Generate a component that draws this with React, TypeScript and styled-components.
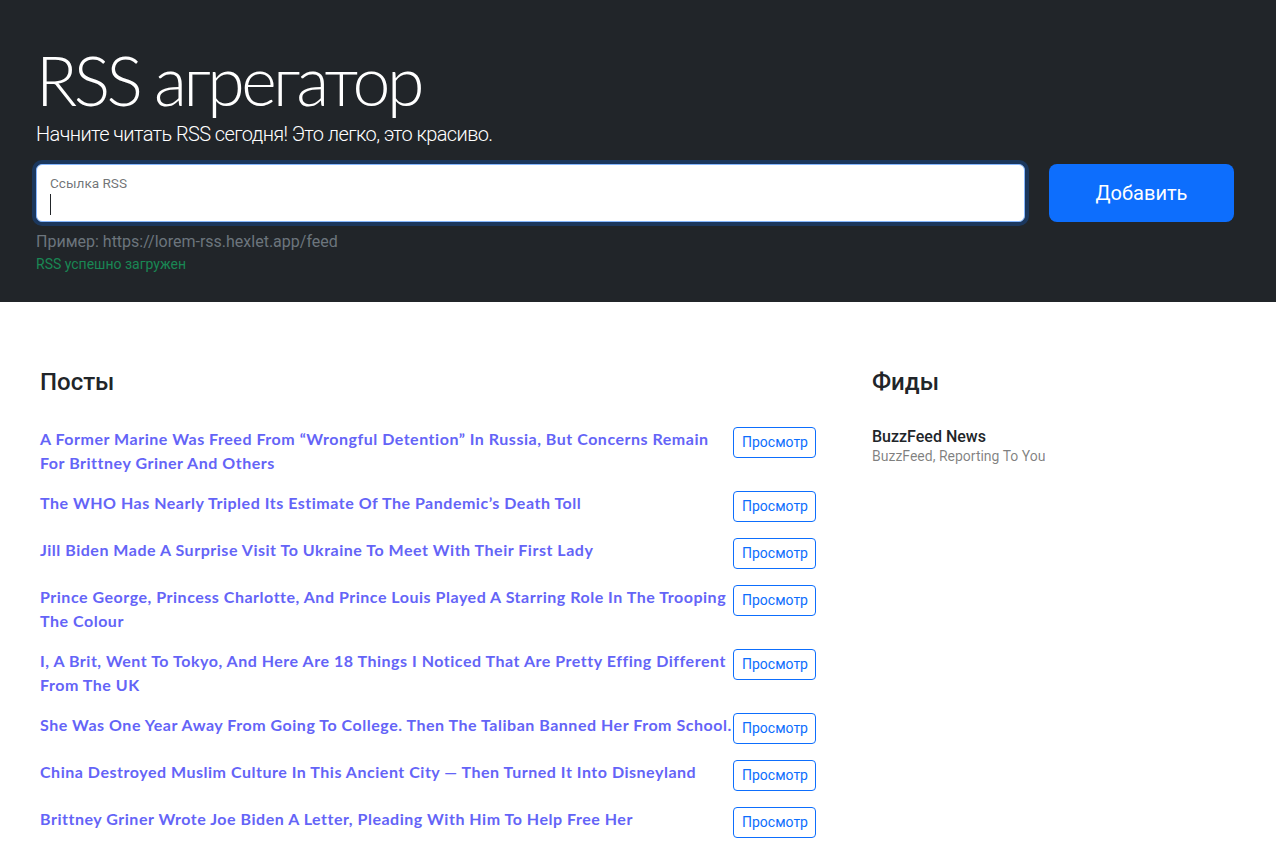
import React from "react";
import styled, { createGlobalStyle } from "styled-components";

const GlobalStyle = createGlobalStyle`
  html, body { margin: 0; padding: 0; overflow: hidden; }
  body {
    font-family: Roboto, "Noto Sans", sans-serif;
    font-size: 16px;
    line-height: 1.5;
    color: #212529;
    background: #fff;
  }
  * { box-sizing: border-box; }
`;

const Hero = styled.section`
  position: relative;
  background: #212529;
  padding: 39px 42px 48px 36px;
`;

const Title = styled.h1`
  margin: 0 0 -2px;
  font-family: Lato, Roboto, sans-serif;
  font-weight: 300;
  font-size: 68px;
  line-height: 1.2;
  letter-spacing: -3.6px;
  color: #fff;
`;

const Lead = styled.p`
  margin: 0 0 15.4px;
  font-size: 20px;
  line-height: 30px;
  font-weight: 300;
  letter-spacing: -0.6px;
  color: #fff;
`;

const FormRow = styled.form`
  display: flex;
  gap: 24px;
  margin: 0;
`;

const Field = styled.div`
  flex: 1;
  height: 58px;
  background: #fff;
  border: 1px solid #86b7fe;
  border-radius: 6px;
  box-shadow: 0 0 0 4px rgba(13, 110, 253, 0.25);
  padding: 8px 13px 0;
  display: flex;
  flex-direction: column;
`;

const FieldLabel = styled.label`
  font-size: 13.6px;
  line-height: 20px;
  color: rgba(33, 37, 41, 0.65);
`;

const Caret = styled.span`
  display: block;
  width: 1px;
  height: 21px;
  margin-top: 1px;
  background: #212529;
`;

const AddButton = styled.button`
  width: 185px;
  height: 58px;
  border: 0;
  border-radius: 8px;
  background: #0d6efd;
  color: #fff;
  font-family: Roboto, sans-serif;
  font-size: 20px;
  line-height: 30px;
  cursor: pointer;
`;

const Hint = styled.p`
  margin: 8px 0 0;
  color: #6c757d;
  font-size: 16px;
  line-height: 24px;
`;

const Feedback = styled.p`
  position: absolute;
  margin: 0;
  font-size: 14px;
  line-height: 21px;
  color: #198754;
`;

const Main = styled.section`
  display: grid;
  grid-template-columns: 808px 1fr;
  column-gap: 24px;
  padding: 50px 24px 0;
`;

const Card = styled.div`
  display: flex;
  flex-direction: column;
`;

const CardHeader = styled.div`
  padding: 16px 16px 14px;
`;

const CardTitle = styled.h2`
  margin: 0 0 8px;
  font-size: 24px;
  font-weight: 500;
  line-height: 28.8px;
  color: #212529;
`;

const List = styled.ul`
  list-style: none;
  margin: 0;
  padding: 0;
`;

const PostItem = styled.li`
  display: flex;
  justify-content: space-between;
  align-items: flex-start;
  padding: 8px 16px;
`;

const PostLink = styled.a`
  font-family: Lato, Roboto, sans-serif;
  font-weight: 700;
  font-size: 16px;
  line-height: 24px;
  letter-spacing: 0.52px;
  color: #6464f7;
  text-decoration: none;
`;

const ViewButton = styled.button`
  flex-shrink: 0;
  padding: 4px 8px;
  border: 1px solid #0d6efd;
  border-radius: 4px;
  background: transparent;
  color: #0d6efd;
  font-family: Roboto, sans-serif;
  font-size: 14px;
  line-height: 21px;
  width: 83px;
`;

const FeedItem = styled.li`
  padding: 8px 16px;
`;

const FeedTitle = styled.h3`
  margin: 0;
  font-size: 16px;
  font-weight: 500;
  line-height: 19.2px;
  color: #212529;
`;

const FeedDesc = styled.p`
  margin: 0;
  font-size: 14px;
  line-height: 21px;
  color: rgba(0, 0, 0, 0.5);
`;

const posts = [
  "A Former Marine Was Freed From “Wrongful Detention” In Russia, But Concerns Remain For Brittney Griner And Others",
  "The WHO Has Nearly Tripled Its Estimate Of The Pandemic’s Death Toll",
  "Jill Biden Made A Surprise Visit To Ukraine To Meet With Their First Lady",
  "Prince George, Princess Charlotte, And Prince Louis Played A Starring Role In The Trooping The Colour",
  "I, A Brit, Went To Tokyo, And Here Are 18 Things I Noticed That Are Pretty Effing Different From The UK",
  "She Was One Year Away From Going To College. Then The Taliban Banned Her From School.",
  "China Destroyed Muslim Culture In This Ancient City — Then Turned It Into Disneyland",
  "Brittney Griner Wrote Joe Biden A Letter, Pleading With Him To Help Free Her",
];

export default function App() {
  return (
    <>
      <GlobalStyle />
      <Hero>
        <Title>RSS агрегатор</Title>
        <Lead>Начните читать RSS сегодня! Это легко, это красиво.</Lead>
        <FormRow onSubmit={(e) => e.preventDefault()}>
          <Field>
            <FieldLabel>Ссылка RSS</FieldLabel>
            <Caret />
          </Field>
          <AddButton type="submit">Добавить</AddButton>
        </FormRow>
        <Hint>Пример: https://lorem-rss.hexlet.app/feed</Hint>
        <Feedback>RSS успешно загружен</Feedback>
      </Hero>
      <Main>
        <Card>
          <CardHeader>
            <CardTitle>Посты</CardTitle>
          </CardHeader>
          <List>
            {posts.map((p) => (
              <PostItem key={p}>
                <PostLink href="#">{p}</PostLink>
                <ViewButton type="button">Просмотр</ViewButton>
              </PostItem>
            ))}
          </List>
        </Card>
        <Card>
          <CardHeader>
            <CardTitle>Фиды</CardTitle>
          </CardHeader>
          <List>
            <FeedItem>
              <FeedTitle>BuzzFeed News</FeedTitle>
              <FeedDesc>BuzzFeed, Reporting To You</FeedDesc>
            </FeedItem>
          </List>
        </Card>
      </Main>
    </>
  );
}
